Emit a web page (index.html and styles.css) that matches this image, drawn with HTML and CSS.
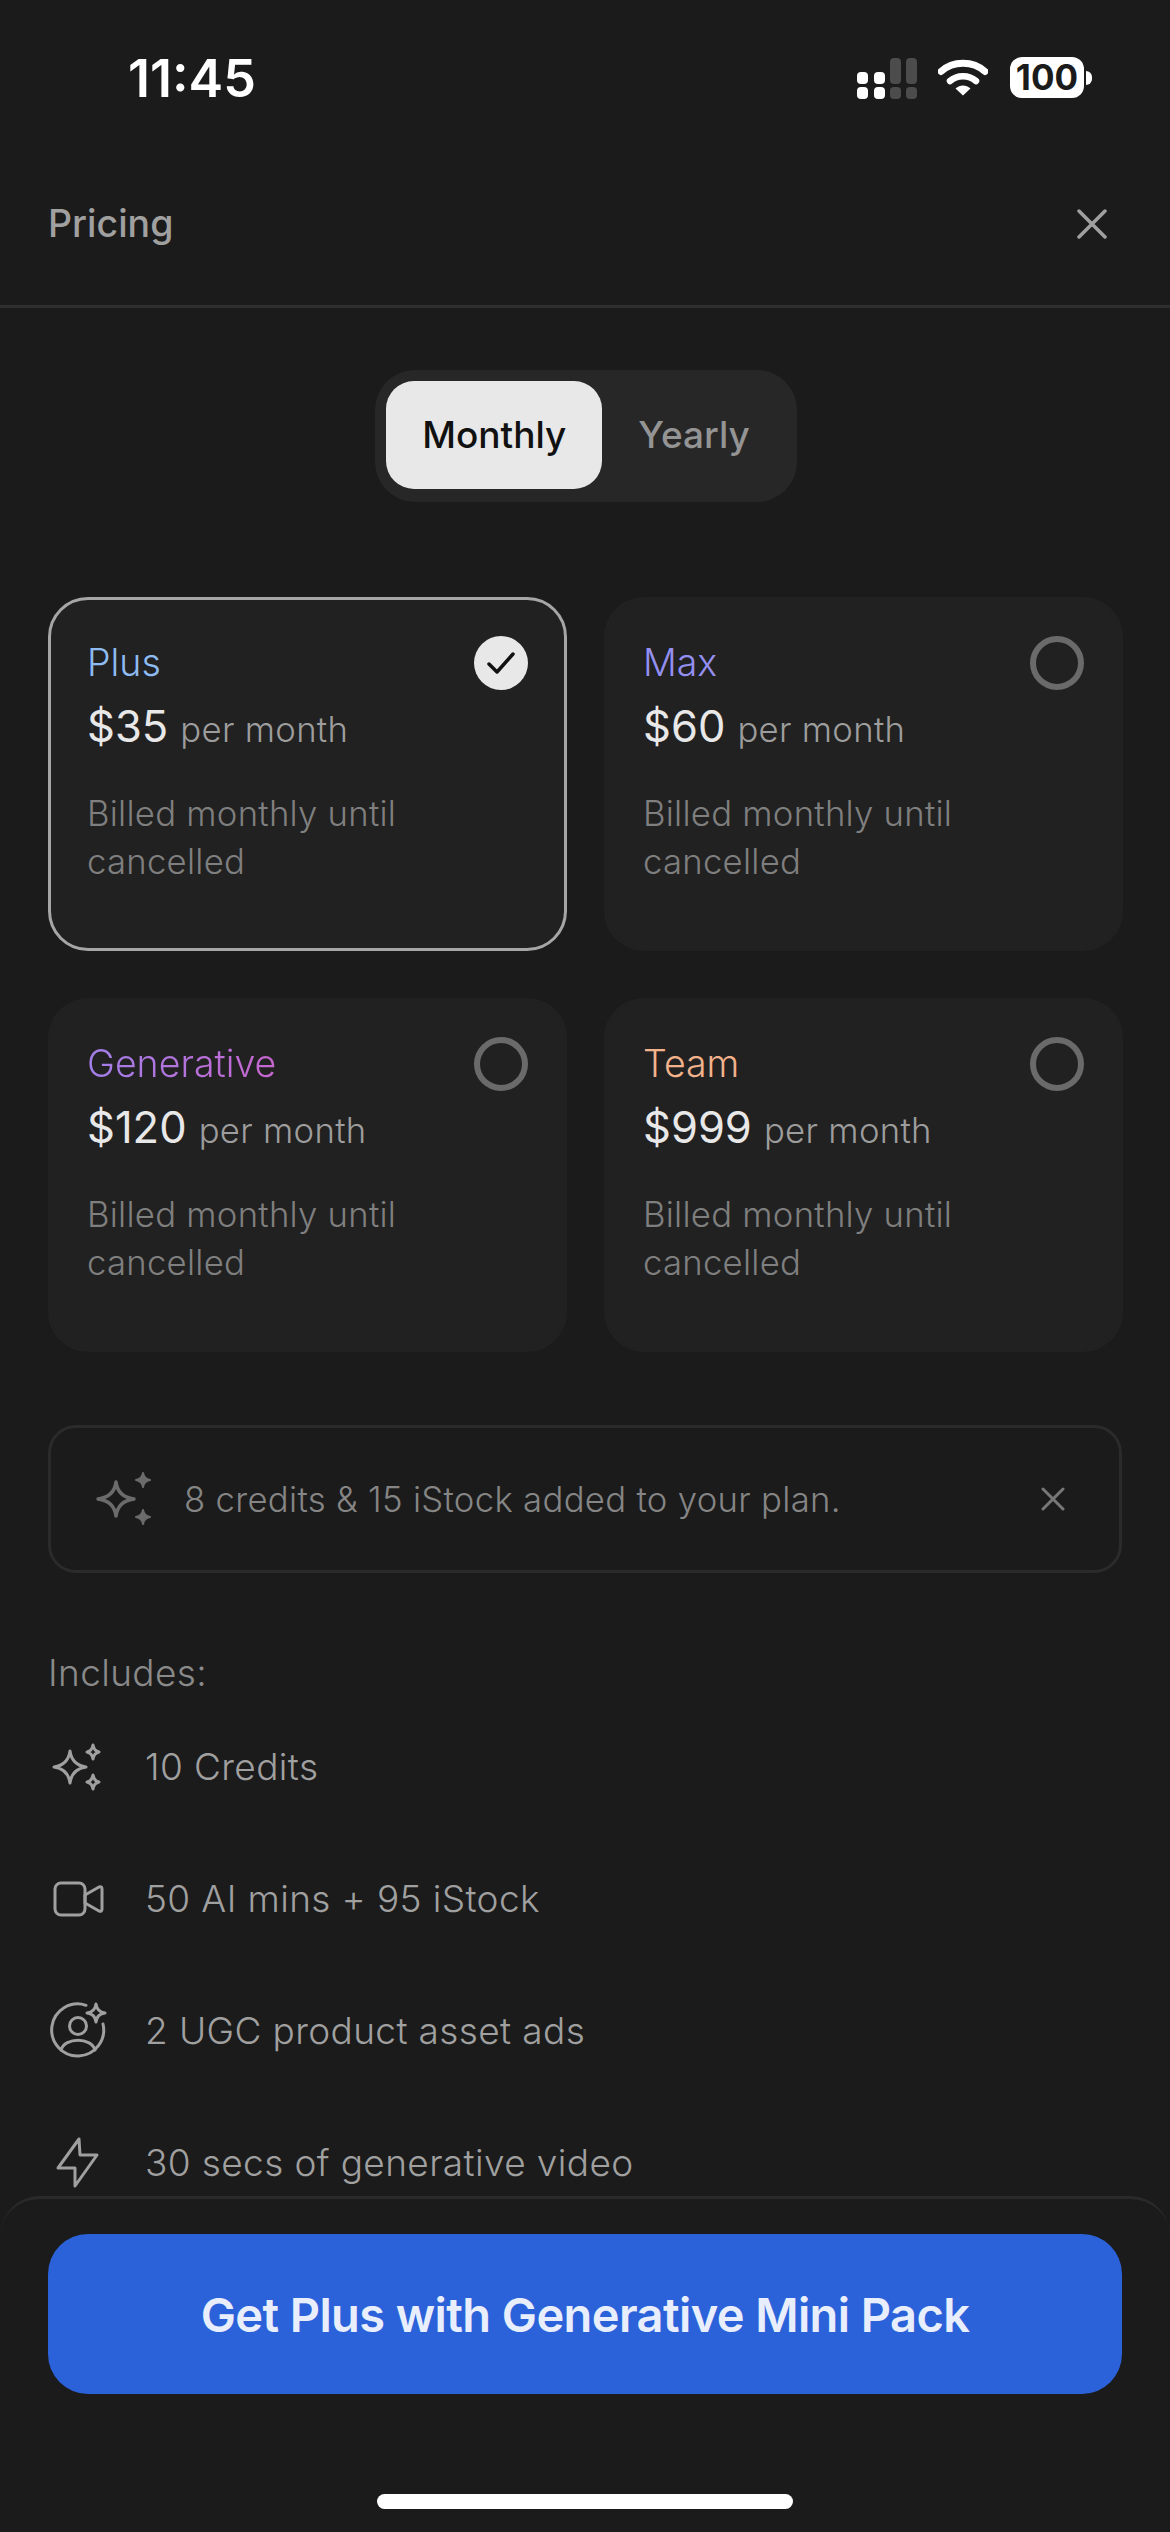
FILE: index.html
```html
<!DOCTYPE html>
<html lang="en">
<head>
<meta charset="utf-8">
<title>Pricing</title>
<link rel="stylesheet" href="styles.css">
</head>
<body>
<div class="screen">
  <div class="status">
    <span class="time">11:45</span>
    <div class="status-icons">
      <svg class="signal" width="60" height="42" viewBox="0 0 60 42">
        <g fill="#fff"><rect x="0" y="15" width="11" height="12" rx="4"/><rect x="17" y="15" width="11" height="12" rx="4"/><rect x="0" y="30" width="11" height="12" rx="4"/><rect x="17" y="30" width="11" height="12" rx="4"/></g>
        <g fill="#4c4c4c"><rect x="33" y="1" width="11" height="26" rx="4"/><rect x="49" y="1" width="11" height="26" rx="4"/><rect x="33" y="30" width="11" height="12" rx="4"/><rect x="49" y="30" width="11" height="12" rx="4"/></g>
      </svg>
      <svg class="wifi" width="50" height="38" viewBox="0 0 50 38">
        <path d="M3 13.5C15 2.5 35 2.5 47 13.5" fill="none" stroke="#fff" stroke-width="7" stroke-linecap="round"/>
        <path d="M12 23C19 16.5 31 16.5 38 23" fill="none" stroke="#fff" stroke-width="6.5" stroke-linecap="round"/>
        <path d="M17.5 30.5C22 26.5 28 26.5 32.500 30.500L25 37.500Z" fill="#fff"/>
      </svg>
      <div class="battery"><span class="battery-level">100</span><span class="battery-nub"></span></div>
    </div>
  </div>
  <header class="head">
    <span class="head-title">Pricing</span>
    <svg class="close" width="30" height="30" viewBox="0 0 30 30"><path d="M2 2L28 28M28 2L2 28" fill="none" stroke="#a0a0a0" stroke-width="3.500" stroke-linecap="round"/></svg>
  </header>
  <main class="scroller">
    <div class="toggle-wrap">
      <div class="toggle">
        <span class="toggle-item toggle-active">Monthly</span>
        <span class="toggle-item">Yearly</span>
      </div>
    </div>
    <section class="plans">
      <article class="plan plan-selected">
        <div class="plan-head">
          <span class="plan-name name-plus">Plus</span>
          <span class="radio radio-on"><svg width="34" height="28" viewBox="0 0 34 28"><path d="M5 15L13 23L29 5" fill="none" stroke="#111" stroke-width="3.500" stroke-linecap="round" stroke-linejoin="round"/></svg></span>
        </div>
        <p class="plan-price"><span class="amount">$35</span> per month</p>
        <p class="plan-note">Billed monthly until cancelled</p>
      </article>
      <article class="plan">
        <div class="plan-head">
          <span class="plan-name name-max">Max</span>
          <span class="radio"></span>
        </div>
        <p class="plan-price"><span class="amount">$60</span> per month</p>
        <p class="plan-note">Billed monthly until cancelled</p>
      </article>
      <article class="plan">
        <div class="plan-head">
          <span class="plan-name name-gen">Generative</span>
          <span class="radio"></span>
        </div>
        <p class="plan-price"><span class="amount">$120</span> per month</p>
        <p class="plan-note">Billed monthly until cancelled</p>
      </article>
      <article class="plan">
        <div class="plan-head">
          <span class="plan-name name-team">Team</span>
          <span class="radio"></span>
        </div>
        <p class="plan-price"><span class="amount">$999</span> per month</p>
        <p class="plan-note">Billed monthly until cancelled</p>
      </article>
    </section>
    <div class="banner">
      <svg class="banner-icon" width="60" height="54" viewBox="0 0 60 54">
        <path d="M23 10Q25 25 41 27Q25 29 23 44Q21 29 5 27Q21 25 23 10Z" fill="none" stroke="#6b6b6b" stroke-width="3.500" stroke-linejoin="round"/>
        <path d="M50 1Q51 7 57 8Q51 9 50 15Q49 9 43 8Q49 7 50 1Z" fill="#6b6b6b" stroke="#6b6b6b" stroke-width="2" stroke-linejoin="round"/>
        <path d="M50 38Q51 44 57 45Q51 46 50 52Q49 46 43 45Q49 44 50 38Z" fill="#6b6b6b" stroke="#6b6b6b" stroke-width="2" stroke-linejoin="round"/>
      </svg>
      <span class="banner-text">8 credits &amp; 15 iStock added to your plan.</span>
      <svg class="banner-close" width="24" height="24" viewBox="0 0 24 24"><path d="M2 2L22 22M22 2L2 22" fill="none" stroke="#777" stroke-width="3" stroke-linecap="round"/></svg>
    </div>
    <p class="includes">Includes:</p>
    <ul class="features">
      <li class="feature">
        <svg class="feature-icon" width="60" height="60" viewBox="0 0 60 60">
          <path d="M22 15Q24 29 38 31Q24 33 22 47Q20 33 6 31Q20 29 22 15Z"/>
          <path d="M45 9Q46 15 51 16Q46 17 45 23Q44 17 39 16Q44 15 45 9Z"/>
          <path d="M45 39Q46 45 51 46Q46 47 45 53Q44 47 39 46Q44 45 45 39Z"/>
        </svg>
        <span>10 Credits</span>
      </li>
      <li class="feature">
        <svg class="feature-icon" width="60" height="60" viewBox="0 0 60 60">
          <rect x="7" y="15" width="30" height="32" rx="6"/>
          <path d="M37 27L51 19Q54 18 54 21V41Q54 44 51 43L37 35Z"/>
        </svg>
        <span>50 AI mins + 95 iStock</span>
      </li>
      <li class="feature">
        <svg class="feature-icon" width="60" height="60" viewBox="0 0 60 60">
          <path d="M38 5.300A26 26 0 1 0 55 24"/>
          <circle cx="30" cy="26" r="8.500"/>
          <path d="M13 50C17 37 43 37 47 50"/>
          <path d="M48 4Q49 12 57 13Q49 14 48 22Q47 14 39 13Q47 12 48 4Z"/>
        </svg>
        <span>2 UGC product asset ads</span>
      </li>
      <li class="feature">
        <svg class="feature-icon" width="60" height="60" viewBox="0 0 60 60">
          <path d="M31 7L10 36H27V54L49 23H32Z"/>
        </svg>
        <span>30 secs of generative video</span>
      </li>
    </ul>
  </main>
  <footer class="foot">
    <button class="cta" type="button">Get Plus with Generative Mini Pack</button>
    <div class="home-bar"></div>
  </footer>
</div>
</body>
</html>
```
FILE: styles.css
```css
* { box-sizing: border-box; }
html, body { margin: 0; padding: 0; background: #1b1b1b; }
body { font-family: Inter, "Noto Sans", sans-serif; }
p, ul { margin: 0; padding: 0; }
ul { list-style: none; }

.screen {
  width: 1170px;
  height: 2532px;
  background: #1b1b1b;
  display: flex;
  flex-direction: column;
  overflow: hidden;
}

.status {
  height: 139px;
  flex: none;
  display: flex;
  justify-content: space-between;
  padding: 58px 78px 0 128px;
}
.time {
  font-size: 52px;
  line-height: 42px;
  font-weight: 600;
  color: #fff;
}
.status-icons { display: flex; align-items: flex-start; margin-top: -1px; }
.signal { margin-right: 21px; }
.wifi { margin-right: 22px; margin-top: 1px; }
.battery { display: flex; align-items: center; height: 41px; }
.battery-level {
  width: 74px;
  height: 41px;
  border-radius: 12px;
  background: #fff;
  color: #1b1b1b;
  font-size: 35px;
  line-height: 41px;
  font-weight: 700;
  text-align: center;
}
.battery-nub {
  width: 6px;
  height: 14px;
  margin-left: 2px;
  background: #fff;
  border-radius: 0 7px 7px 0;
}

.head {
  height: 169px;
  flex: none;
  display: flex;
  align-items: center;
  justify-content: space-between;
  padding: 3px 63px 0 48px;
  border-bottom: 3px solid #2e2e2e;
}
.head-title {
  font-size: 37.5px;
  line-height: 44px;
  font-weight: 500;
  color: #a0a0a0;
}

.scroller { flex: 1; min-height: 0; overflow: hidden; padding: 62px 48px 0; }

.toggle-wrap { display: flex; justify-content: center; padding-left: 2px; }
.toggle {
  display: flex;
  padding: 11px 11px 13px;
  border-radius: 40px;
  background: #272727;
}
.toggle-item {
  height: 108px;
  padding: 0 36px;
  border-radius: 28px;
  font-size: 37px;
  line-height: 108px;
  font-weight: 550;
  color: #949494;
}
.toggle-active { background: #e8e8e8; color: #111; }

.plans {
  margin-top: 95px;
  display: grid;
  grid-template-columns: 519px 519px;
  grid-auto-rows: 354px;
  column-gap: 37px;
  row-gap: 47px;
}
.plan {
  padding: 36px 36px 0 36px;
  border: 3px solid #212121;
  border-radius: 40px;
  background: #212121;
}
.plan-selected { border-color: #a6a6a6; }
.plan-head {
  display: flex;
  align-items: center;
  justify-content: space-between;
  height: 54px;
}
.plan-name { font-size: 37.5px; line-height: 48px; font-weight: 350; }
.name-plus { color: #8dbbf2; }
.name-max { color: #9490f2; }
.name-gen {
  background: linear-gradient(90deg, #a17fe8, #c766cf);
  -webkit-background-clip: text;
  background-clip: text;
  color: transparent;
}
.name-team { color: #f2b28c; }

.radio {
  width: 54px;
  height: 54px;
  border: 6px solid #6a6a6a;
  border-radius: 50%;
  display: flex;
  align-items: center;
  justify-content: center;
}
.radio-on { border: 0; background: #e8e8e8; }

.plan-price {
  margin-top: 11px;
  font-size: 34.7px;
  line-height: 50px;
  font-weight: 350;
  letter-spacing: 0.3px;
  color: #9d9d9d;
}
.amount { font-size: 43.5px; color: #e8e8e8; margin-right: 2px; font-weight: 400; letter-spacing: 0; }
.plan-note {
  margin-top: 35px;
  width: 350px;
  font-size: 34.7px;
  line-height: 48px;
  font-weight: 350;
  letter-spacing: 0.25px;
  color: #7f7f7f;
}

.banner {
  margin-top: 73px;
  height: 148px;
  display: flex;
  align-items: center;
  padding: 0 54px 0 42px;
  border: 3px solid #2b2b2b;
  border-radius: 28px;
}
.banner-icon { flex: none; margin-right: 31px; }
.banner-text { flex: 1; font-size: 34.7px; line-height: 48px; font-weight: 350; letter-spacing: 0.3px; color: #858585; }
.banner-close { flex: none; }

.includes {
  margin-top: 76px;
  font-size: 37px;
  line-height: 48px;
  font-weight: 350;
  letter-spacing: 0.35px;
  color: #8a8a8a;
}
.features { margin-top: 3px; }
.feature {
  height: 132px;
  display: flex;
  align-items: center;
  font-size: 37px;
  font-weight: 350;
  letter-spacing: 0.38px;
  color: #a0a0a0;
  gap: 37px;
}
.feature-icon {
  flex: none;
  fill: none;
  stroke: #a0a0a0;
  stroke-width: 3;
  stroke-linejoin: round;
  stroke-linecap: round;
}

.foot {
  flex: none;
  height: 336px;
  padding: 35px 48px 0;
  border-top: 3px solid #2a2a2a;
  border-radius: 40px 40px 0 0;
  background: #1b1b1b;
}
.cta {
  display: block;
  width: 100%;
  height: 160px;
  border: 0;
  border-radius: 40px;
  background: #2b62d9;
  color: #e8eefc;
  font-family: inherit;
  font-size: 47px;
  font-weight: 600;
  letter-spacing: -0.6px;
}
.home-bar {
  width: 416px;
  height: 15px;
  margin: 100px auto 0;
  border-radius: 8px;
  background: #fff;
}
```
